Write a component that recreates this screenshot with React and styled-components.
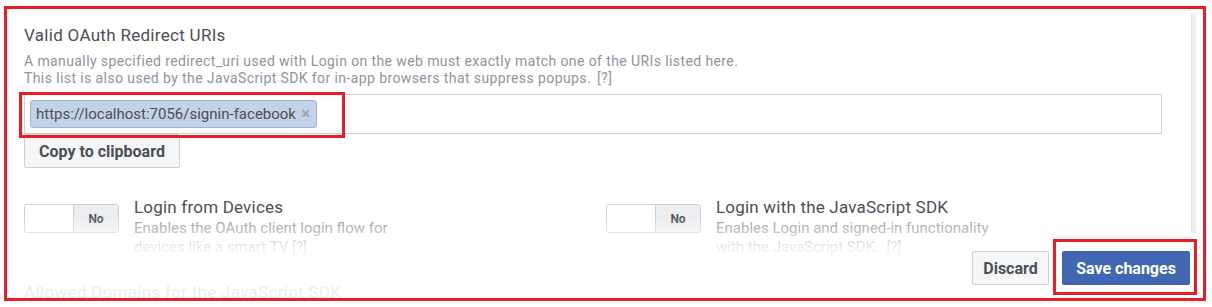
import styled, { createGlobalStyle } from 'styled-components';

const Global = createGlobalStyle`
  body {
    margin: 0;
    background: #ffffff;
    font-family: Roboto, 'Liberation Sans', Arial, sans-serif;
  }
`;

const Frame = styled.div`
  position: relative;
  box-sizing: border-box;
  width: 1202px;
  height: 295px;
  margin: 6px 0 0 4px;
  border: 3px solid #ec1c24;
  display: flex;
  overflow: hidden;
`;

const ScrollContent = styled.div`
  flex: 1;
  padding: 16px 0 0 17px;
  overflow: hidden;
`;

const ScrollTrack = styled.div`
  align-self: flex-start;
  width: 4px;
  height: 219px;
  margin: 5px 7px 0 0;
  background: #eeeeee;
  border-left: 1px solid #e2e2e2;
  position: relative;
  z-index: 2;
`;

const Title = styled.div`
  font-size: 17px;
  line-height: 20px;
  letter-spacing: 0.3px;
  color: #4b4f56;
  margin-bottom: 8px;
  margin-top: ${p => p.$top || 0}px;
  white-space: nowrap;
`;

const Desc = styled.div`
  font-size: 14px;
  line-height: 17px;
  letter-spacing: 0.4px;
  color: #90949c;
`;

const Help = styled.span`
  margin-left: 6px;
`;

const TagInput = styled.div`
  box-sizing: border-box;
  width: 1138px;
  height: 40px;
  margin-top: 7px;
  padding: 5px;
  border: 1px solid #ccd0d5;
  display: flex;
  align-items: flex-start;
`;

const Annotated = styled.span`
  position: relative;
  display: inline-flex;
  &::after {
    content: '';
    position: absolute;
    left: ${p => p.$l}px;
    top: ${p => p.$t}px;
    right: ${p => p.$r}px;
    bottom: ${p => p.$b}px;
    border: 3px solid #ec1c24;
    pointer-events: none;
  }
`;

const Tag = styled.span`
  box-sizing: border-box;
  width: 287px;
  height: 28px;
  padding: 0 6px 0 5px;
  display: inline-flex;
  align-items: center;
  justify-content: space-between;
  background: #c4d2e7;
  border: 1px solid #9cb4d8;
  border-radius: 3px;
  font-size: 15px;
  color: #4b4f56;
  white-space: nowrap;
`;

const TagClose = styled.span`
  font-size: 16px;
  font-weight: bold;
  color: #9ca6b6;
  line-height: 1;
`;

const Button = styled.button`
  box-sizing: border-box;
  width: ${p => p.$w}px;
  height: 34px;
  padding: 0;
  border: 1px solid ${p => (p.$primary ? '#4267b2' : '#ccd0d5')};
  border-radius: 2px;
  background: ${p => (p.$primary ? '#4267b2' : '#f5f6f7')};
  color: ${p => (p.$primary ? '#ffffff' : '#4b4f56')};
  font-family: Roboto, 'Liberation Sans', Arial, sans-serif;
  font-size: 16px;
  font-weight: bold;
  white-space: nowrap;
  cursor: pointer;
`;

const CopyButton = styled(Button)`
  display: block;
`;

const Options = styled.div`
  display: grid;
  grid-template-columns: 582px 1fr;
  margin-top: 29px;
`;

const Option = styled.div`
  display: flex;
  align-items: flex-start;
  gap: 15px;
`;

const Toggle = styled.div`
  box-sizing: border-box;
  width: 95px;
  height: 29px;
  margin-top: 7px;
  border: 1px solid #ccd0d5;
  border-radius: 3px;
  display: flex;
  overflow: hidden;
  flex-shrink: 0;
`;

const ToggleOff = styled.div`
  width: 48px;
  background: #ffffff;
  border-right: 1px solid #ccd0d5;
`;

const ToggleLabel = styled.div`
  flex: 1;
  background: #ebedf0;
  display: flex;
  align-items: center;
  justify-content: center;
  font-size: 12px;
  font-weight: bold;
  color: #4b4f56;
`;

const OptionText = styled.div`
  max-width: 290px;
`;

const OptionTitle = styled.div`
  font-size: 17px;
  line-height: 20px;
  letter-spacing: 0.2px;
  color: #4b4f56;
  margin-bottom: 2px;
  white-space: nowrap;
`;

const OptionDesc = styled.div`
  font-size: 15px;
  line-height: 18.5px;
  color: #90949c;
`;

const Footer = styled.div`
  position: absolute;
  left: 0;
  right: 0;
  bottom: 0;
  height: 83px;
  box-sizing: border-box;
  padding: 0 13px 13px 0;
  display: flex;
  justify-content: flex-end;
  align-items: flex-end;
  gap: 13px;
  background: linear-gradient(
    to bottom,
    rgba(255, 255, 255, 0) 0px,
    rgba(255, 255, 255, 0.35) 14px,
    rgba(255, 255, 255, 0.86) 34px,
    rgba(255, 255, 255, 0.9) 100%
  );
`;

const options = [
  {
    title: 'Login from Devices',
    desc: 'Enables the OAuth client login flow for devices like a smart TV',
    gap: ' ',
  },
  {
    title: 'Login with the JavaScript SDK',
    desc: 'Enables Login and signed-in functionality with the JavaScript SDK.',
    gap: '\u00a0 ',
  },
];

const App = () => {
  return (
    <>
      <Global />
      <Frame>
        <ScrollContent>
          <Title>Valid OAuth Redirect URIs</Title>
          <Desc>
            A manually specified redirect_uri used with Login on the web must exactly match one of the URIs listed here.
            <br />
            This list is also used by the JavaScript SDK for in-app browsers that suppress popups.
            <Help>[?]</Help>
          </Desc>
          <TagInput>
            <Annotated $l={-11} $t={-8} $r={-28} $b={-10}>
              <Tag>
                https://localhost:7056/signin-facebook
                <TagClose>×</TagClose>
              </Tag>
            </Annotated>
          </TagInput>
          <CopyButton $w={156}>Copy to clipboard</CopyButton>

          <Options>
            {options.map(o => (
              <Option key={o.title}>
                <Toggle>
                  <ToggleOff />
                  <ToggleLabel>No</ToggleLabel>
                </Toggle>
                <OptionText>
                  <OptionTitle>{o.title}</OptionTitle>
                  <OptionDesc>
                    {o.desc}
                    {o.gap}[?]
                  </OptionDesc>
                </OptionText>
              </Option>
            ))}
          </Options>

          <Title $top={26}>Allowed Domains for the JavaScript SDK</Title>
        </ScrollContent>
        <ScrollTrack />
        <Footer>
          <Button $w={77}>Discard</Button>
          <Annotated $l={-9} $t={-12} $r={-7} $b={-10}>
            <Button $primary $w={128}>Save changes</Button>
          </Annotated>
        </Footer>
      </Frame>
    </>
  );
};

export default App;
